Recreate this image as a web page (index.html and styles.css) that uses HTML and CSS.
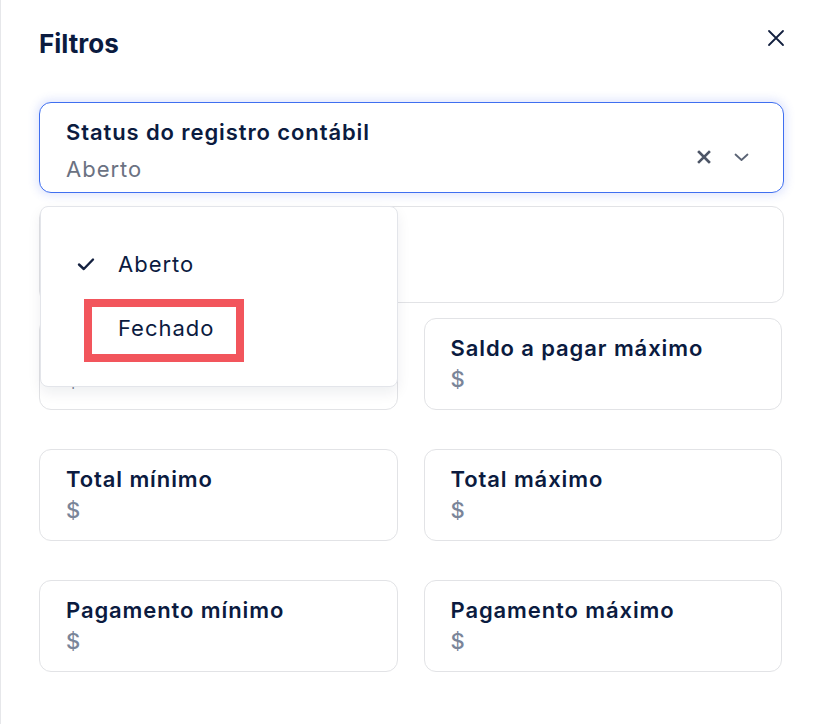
FILE: index.html
```html
<!DOCTYPE html>
<html lang="pt">
<head>
<meta charset="utf-8">
<title>Filtros</title>
<link rel="stylesheet" href="styles.css">
</head>
<body>
<div class="drawer">
  <div class="header">
    <h1 class="title">Filtros</h1>
    <button class="close" aria-label="Fechar">
      <svg width="18" height="18" viewBox="0 0 18 18"><path d="M2 2L16 16M16 2L2 16" stroke="#13203f" stroke-width="1.8" stroke-linecap="round" fill="none"/></svg>
    </button>
  </div>

  <div class="select focused">
    <div class="select-body">
      <div class="label">Status do registro contábil</div>
      <div class="value">Aberto</div>
    </div>
    <div class="select-icons">
      <svg class="clear" width="14" height="14" viewBox="0 0 14 14"><path d="M2 2L12 12M12 2L2 12" stroke="#4d5566" stroke-width="2.6" stroke-linecap="square" fill="none"/></svg>
      <svg class="chev" width="15" height="9" viewBox="0 0 15 9"><path d="M1.5 1.5L7.5 7L13.5 1.5" stroke="#5b6475" stroke-width="1.8" stroke-linecap="round" stroke-linejoin="round" fill="none"/></svg>
    </div>

    <div class="menu">
      <div class="option selected">
        <svg class="check" width="18" height="14" viewBox="0 0 18 14"><path d="M2 7.5L6.8 12L16 2.5" stroke="#13203f" stroke-width="2.4" stroke-linecap="round" stroke-linejoin="round" fill="none"/></svg>
        <span>Aberto</span>
      </div>
      <div class="option highlighted">
        <span>Fechado</span>
      </div>
    </div>
  </div>

  <div class="field tall"></div>

  <div class="grid">
    <div class="field">
      <div class="label">Saldo a pagar mínimo</div>
      <div class="money">$</div>
    </div>
    <div class="field">
      <div class="label">Saldo a pagar máximo</div>
      <div class="money">$</div>
    </div>
    <div class="field">
      <div class="label">Total mínimo</div>
      <div class="money">$</div>
    </div>
    <div class="field">
      <div class="label">Total máximo</div>
      <div class="money">$</div>
    </div>
    <div class="field">
      <div class="label">Pagamento mínimo</div>
      <div class="money">$</div>
    </div>
    <div class="field">
      <div class="label">Pagamento máximo</div>
      <div class="money">$</div>
    </div>
  </div>
</div>
</body>
</html>
```

FILE: styles.css
```css
* { box-sizing: border-box; }

html, body {
  margin: 0;
  padding: 0;
  background: #ffffff;
}

body {
  font-family: "Inter", "Noto Sans", sans-serif;
  color: #0b1b3f;
  border-left: 1px solid #e6e7ea;
  min-height: 724px;
}

.drawer {
  padding: 24px 34px 0 38px;
}

.header {
  display: flex;
  justify-content: space-between;
  align-items: flex-start;
  height: 78px;
}

.title {
  margin: 0;
  font-size: 26px;
  line-height: 40px;
  font-weight: 700;
  color: #0b1b3f;
}

.close {
  border: 0;
  background: none;
  padding: 0;
  margin-top: 5px;
  margin-right: -1px;
  width: 18px;
  height: 18px;
  display: block;
}
.close svg { display: block; }

.select {
  position: relative;
  display: flex;
  align-items: flex-start;
  height: 91px;
  border: 1px solid #3f6ff0;
  border-radius: 12px;
  box-shadow: 0 0 8px 3px rgba(80, 110, 240, 0.16);
  padding: 16px 34px 0 26px;
  background: #fff;
}

.select-body {
  flex: 1;
}

.label {
  font-size: 22px;
  line-height: 26px;
  font-weight: 600;
  letter-spacing: 0.9px;
  color: #0b1b3f;
  white-space: nowrap;
}

.value {
  margin-top: 10px;
  font-size: 22px;
  line-height: 28px;
  font-weight: 400;
  letter-spacing: 1px;
  color: #6b7282;
}

.select-icons {
  display: flex;
  align-items: center;
  gap: 23px;
  margin-top: 31px;
}
.select-icons svg { display: block; }

.menu {
  position: absolute;
  left: 0;
  top: 103px;
  width: 358px;
  height: 181px;
  background: #fff;
  border: 1px solid #e3e5ea;
  border-radius: 8px;
  box-shadow: 0 6px 14px rgba(20, 30, 60, 0.07);
  padding-top: 37px;
  z-index: 5;
}

.option {
  display: flex;
  align-items: center;
  font-size: 22px;
  letter-spacing: 1px;
  color: #0b1b3f;
}

.option.selected {
  height: 40px;
  padding-left: 36px;
  gap: 23px;
}

.option.highlighted {
  margin-top: 15px;
  margin-left: 43px;
  width: 160px;
  height: 63px;
  border: 8px solid #f2555c;
  padding-left: 26px;
  padding-bottom: 5px;
}

.field {
  height: 92px;
  border: 1px solid #e2e3e6;
  border-radius: 12px;
  padding: 16px 26px 0;
  background: #fff;
}

.field.tall {
  height: 97px;
  margin-top: 13px;
}

.grid {
  display: grid;
  grid-template-columns: 1fr 1fr;
  column-gap: 26px;
  row-gap: 39px;
  margin-top: 15px;
  margin-right: 2px;
}

.money {
  margin-top: 4px;
  font-size: 22px;
  line-height: 28px;
  font-weight: 500;
  color: #7a8599;
}
```
